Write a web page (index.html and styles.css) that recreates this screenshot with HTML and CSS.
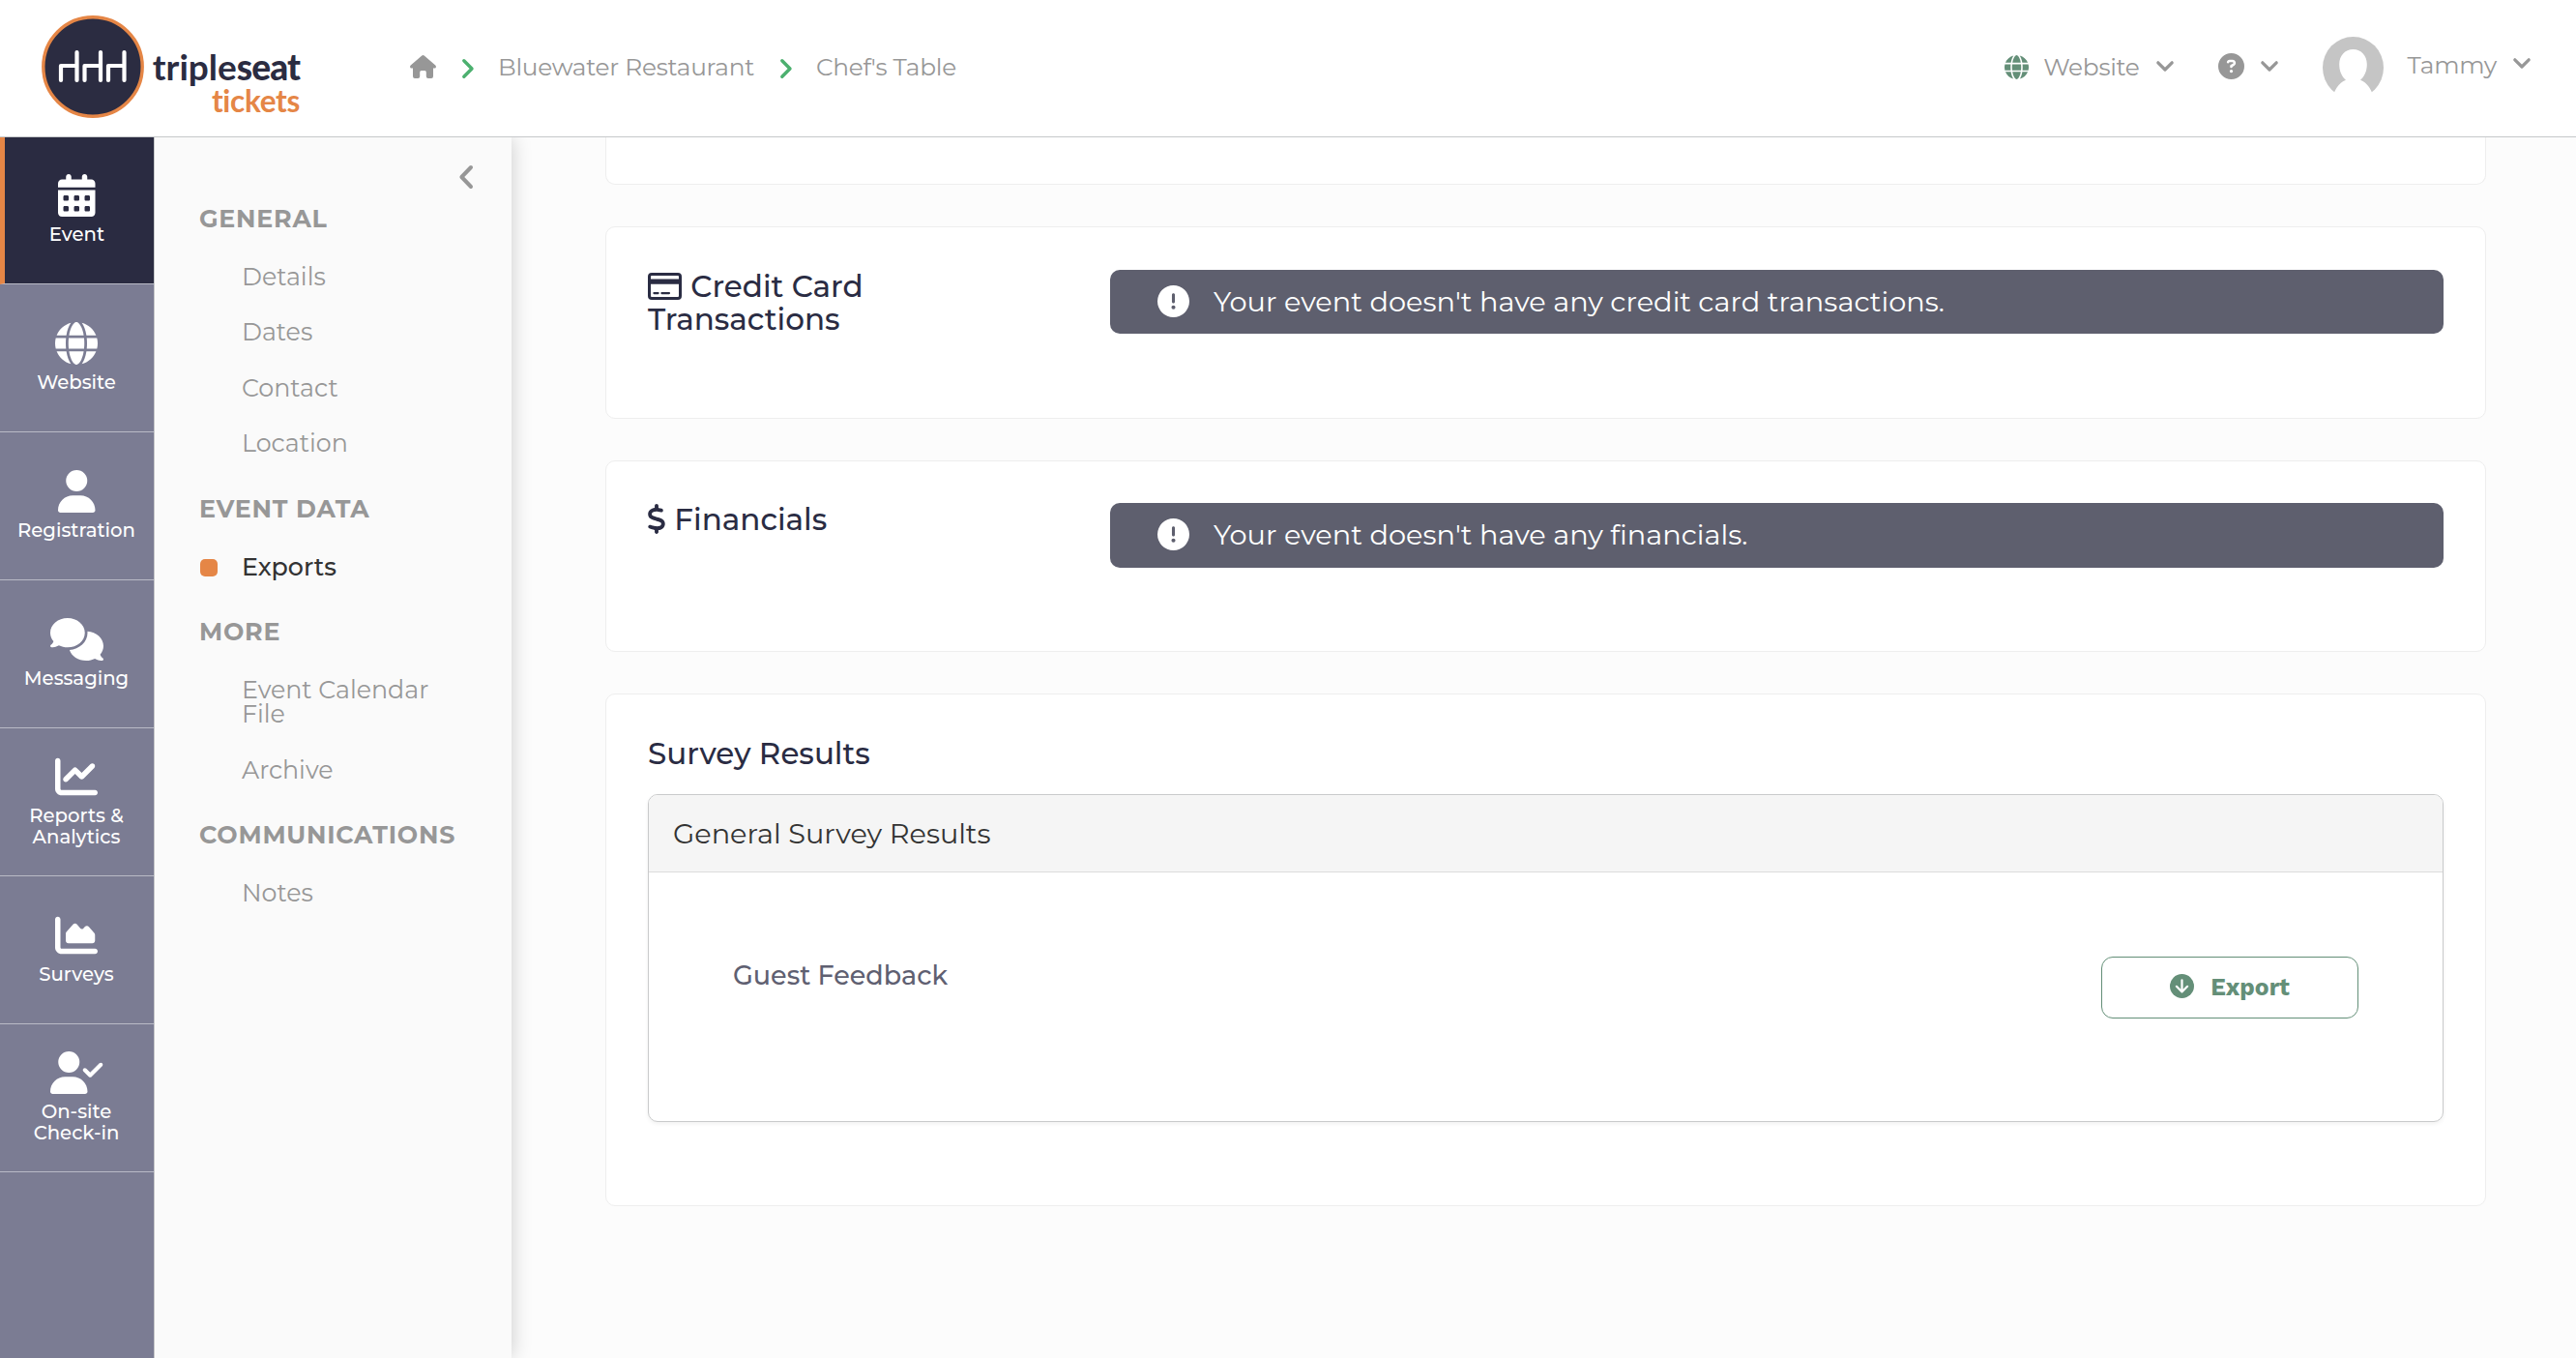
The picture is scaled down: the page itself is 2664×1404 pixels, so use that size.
FILE: index.html
```
<!DOCTYPE html>
<html lang="en">
<head>
    <meta charset="UTF-8">
    <meta name="viewport" content="width=device-width, initial-scale=1.0">
    <title>Chef's Table - Exports - Tripleseat Tickets</title>
    <link rel="stylesheet" href="styles.css">
</head>
<body>
    <header>
        <a class="logo" href="#">
            <svg class="logo-mark" viewBox="0 0 106 106">
                <circle cx="53" cy="53" r="51.2" fill="#2b2c41" stroke="#e58646" stroke-width="3.4"/>
                <g fill="none" stroke="#fff" stroke-width="4.2" stroke-linecap="round" stroke-linejoin="round">
                    <path d="M20 67V52h16.500M36.500 38v29"/>
                    <path d="M44.500 67V52h16.500M61 38v29"/>
                    <path d="M69 67V52h16.500M85.500 38v29"/>
                </g>
            </svg>
            <span class="logo-text">
                <span class="logo-name"><span>triple</span><b>seat</b></span>
                <span class="logo-sub">tickets</span>
            </span>
        </a>

        <nav class="breadcrumb">
            <svg class="home" viewBox="0 0 27 24"><path d="M12.300 .5q1.200-1 2.400 0L26.300 10.600q1.200 1.200.4 2.300-.5.700-1.700.7h-1V22q0 2-2 2h-3.200q-2 0-2-2v-4.300q0-1.600-1.500-1.600h-3.600q-1.500 0-1.500 1.600V22q0 2-2 2H5q-2 0-2-2v-8.400H2q-1.200 0-1.700-.7-.8-1.100.4-2.300z"/></svg>
            <svg class="sep" viewBox="0 0 12 20"><path d="M1.800 1.800L10 10l-8.200 8.200"/></svg>
            <a href="#">Bluewater Restaurant</a>
            <svg class="sep" viewBox="0 0 12 20"><path d="M1.800 1.800L10 10l-8.200 8.200"/></svg>
            <a href="#">Chef's Table</a>
        </nav>

        <div class="tools">
            <a class="tool" href="#">
                <svg class="globe" viewBox="0 0 512 512"><use href="#i-globe"/></svg>
                <span class="tool-website">Website</span>
                <svg class="down" viewBox="0 0 18 11"><path d="M1.800 1.800L9 9l7.200-7.200"/></svg>
            </a>
            <a class="tool" href="#">
                <svg class="help" viewBox="0 0 512 512"><path d="M256 512A256 256 0 1 0 256 0a256 256 0 1 0 0 512zM169.800 165.300c7.900-22.300 29.100-37.300 52.800-37.300h58.300c34.900 0 63.100 28.300 63.100 63.100c0 22.600-12.100 43.500-31.700 54.800L280 264.400c-.2 13-10.900 23.600-24 23.600c-13.300 0-24-10.700-24-24V250.500c0-8.600 4.600-16.500 12.100-20.800l44.300-25.400c4.700-2.700 7.600-7.700 7.600-13.100c0-8.400-6.800-15.100-15.100-15.100H222.600c-3.400 0-6.400 2.100-7.500 5.300l-.4 1.200c-4.400 12.500-18.200 19-30.600 14.600s-19-18.200-14.600-30.600l.4-1.200zM224 352a32 32 0 1 1 64 0 32 32 0 1 1 -64 0z"/></svg>
                <svg class="down" viewBox="0 0 18 11"><path d="M1.800 1.800L9 9l7.200-7.200"/></svg>
            </a>
            <a class="tool user" href="#">
                <svg class="avatar" viewBox="0 0 63 64">
                    <ellipse cx="31.500" cy="32" rx="31.500" ry="32" fill="#c5c5c5"/>
                    <path fill="#fff" d="M31.500 13C23 13 17.200 19.500 17.200 28.500c0 6.800 2.500 12.800 6.800 16.200C16.500 47.500 11.500 56 9.500 65h44C51.500 56 46.500 47.500 39 44.700c4.300-3.400 6.800-9.400 6.800-16.200C45.800 19.500 40 13 31.500 13z"/>
                </svg>
                <span class="tool-name">Tammy</span>
                <svg class="down" viewBox="0 0 18 11"><path d="M1.800 1.800L9 9l7.200-7.200"/></svg>
            </a>
        </div>
    </header>

    <div class="layout">
        <nav class="sidebar">
            <a class="active" href="#">
                <svg viewBox="0 0 448 512"><path d="M128 0c17.700 0 32 14.300 32 32V64H288V32c0-17.700 14.300-32 32-32s32 14.300 32 32V64h48c26.500 0 48 21.500 48 48v48H0V112C0 85.500 21.500 64 48 64H96V32c0-17.700 14.300-32 32-32zM0 192H448V464c0 26.500-21.500 48-48 48H48c-26.500 0-48-21.500-48-48V192zm64 80v32c0 8.800 7.200 16 16 16h32c8.800 0 16-7.200 16-16V272c0-8.800-7.200-16-16-16H80c-8.800 0-16 7.200-16 16zm128 0v32c0 8.800 7.200 16 16 16h32c8.800 0 16-7.200 16-16V272c0-8.800-7.200-16-16-16H208c-8.800 0-16 7.200-16 16zm144-16c-8.800 0-16 7.200-16 16v32c0 8.800 7.200 16 16 16h32c8.800 0 16-7.200 16-16V272c0-8.800-7.200-16-16-16H336zM64 400v32c0 8.800 7.200 16 16 16h32c8.800 0 16-7.200 16-16V400c0-8.800-7.200-16-16-16H80c-8.800 0-16 7.200-16 16zm144-16c-8.800 0-16 7.200-16 16v32c0 8.800 7.200 16 16 16h32c8.800 0 16-7.200 16-16V400c0-8.800-7.200-16-16-16H208zm112 16v32c0 8.800 7.200 16 16 16h32c8.800 0 16-7.200 16-16V400c0-8.800-7.200-16-16-16H336c-8.800 0-16 7.200-16 16z"/></svg>
                <span>Event</span>
            </a>
            <a href="#">
                <svg viewBox="0 0 512 512"><path id="i-globe" d="M352 256c0 22.200-1.200 43.600-3.300 64H163.300c-2.200-20.400-3.300-41.800-3.300-64s1.200-43.600 3.300-64H348.700c2.200 20.400 3.300 41.800 3.300 64zm28.800-64H503.900c5.300 20.500 8.100 41.900 8.100 64s-2.800 43.500-8.100 64H380.800c2.100-20.600 3.200-42 3.200-64s-1.100-43.400-3.200-64zm112.600-32H376.700c-10-63.900-29.800-117.400-55.300-151.600c78.300 20.700 142 77.500 171.900 151.600zm-149.100 0H167.700c6.100-36.400 15.500-68.600 27-94.700c10.500-23.600 22.200-40.700 33.500-51.500C239.400 3.200 248.700 0 256 0s16.600 3.200 27.800 13.800c11.300 10.800 23 27.900 33.500 51.500c11.600 26 20.900 58.200 27 94.700zm-209 0H18.600C48.600 85.900 112.200 29.100 190.600 8.400C165.100 42.600 145.300 96.100 135.300 160zM8.100 192H131.200c-2.100 20.600-3.200 42-3.200 64s1.100 43.400 3.200 64H8.100C2.800 299.500 0 278.100 0 256s2.800-43.500 8.100-64zM194.700 446.600c-11.600-26-20.900-58.200-27-94.600H344.300c-6.100 36.400-15.500 68.600-27 94.600c-10.500 23.600-22.200 40.700-33.500 51.500C272.600 508.800 263.300 512 256 512s-16.600-3.200-27.800-13.800c-11.300-10.800-23-27.900-33.500-51.500zM135.300 352c10 63.900 29.800 117.400 55.300 151.600C112.200 482.900 48.600 426.100 18.600 352H135.300zm358.100 0c-30 74.100-93.600 130.900-171.900 151.600c25.500-34.200 45.200-87.700 55.300-151.600H493.400z"/></svg>
                <span>Website</span>
            </a>
            <a href="#">
                <svg viewBox="0 0 448 512"><path d="M224 256A128 128 0 1 0 224 0a128 128 0 1 0 0 256zm-45.700 48C79.800 304 0 383.800 0 482.300C0 498.700 13.300 512 29.700 512H418.300c16.400 0 29.700-13.300 29.700-29.700C448 383.800 368.200 304 269.700 304H178.300z"/></svg>
                <span>Registration</span>
            </a>
            <a href="#">
                <svg viewBox="0 0 640 512"><path d="M208 352c114.900 0 208-78.800 208-176S322.900 0 208 0S0 78.800 0 176c0 38.600 14.700 74.300 39.600 103.400c-3.500 9.400-8.700 17.700-14.200 24.700c-4.800 6.200-9.700 11-13.300 14.300c-1.800 1.600-3.300 2.900-4.300 3.700c-.5 .4-.9 .7-1.100 .8l-.2 .2C1 327.200-1.400 334.400 .8 340.900S9.100 352 16 352c21.800 0 43.800-5.600 62.100-12.500c9.200-3.500 17.800-7.400 25.200-11.400C134.100 343.300 169.800 352 208 352zM448 176c0 112.300-99.100 196.900-216.500 207C255.800 457.400 336.400 512 432 512c38.200 0 73.900-8.700 104.700-23.900c7.500 4 16 7.900 25.200 11.400c18.300 6.900 40.300 12.500 62.100 12.500c6.900 0 13.100-4.500 15.200-11.100c2.100-6.600-.2-13.800-5.800-17.900l-.2-.2c-.2-.2-.6-.4-1.100-.8c-1-.8-2.500-2-4.300-3.700c-3.600-3.300-8.500-8.100-13.300-14.300c-5.500-7-10.700-15.400-14.200-24.700c24.900-29 39.600-64.700 39.600-103.400c0-92.800-84.900-168.900-192.600-175.500c.4 5.100 .6 10.300 .6 15.500z"/></svg>
                <span>Messaging</span>
            </a>
            <a href="#">
                <svg viewBox="0 0 512 512"><path d="M64 64c0-17.700-14.300-32-32-32S0 46.300 0 64V400c0 44.200 35.800 80 80 80H480c17.700 0 32-14.300 32-32s-14.300-32-32-32H80c-8.800 0-16-7.200-16-16V64zm406.600 86.600c12.500-12.500 12.500-32.800 0-45.300s-32.800-12.500-45.300 0L320 210.700l-57.400-57.400c-12.500-12.500-32.800-12.500-45.300 0l-112 112c-12.500 12.500-12.500 32.800 0 45.300s32.800 12.500 45.300 0L240 221.300l57.400 57.400c12.500 12.500 32.800 12.500 45.300 0l128-128z"/></svg>
                <span>Reports &amp;<br>Analytics</span>
            </a>
            <a href="#">
                <svg viewBox="0 0 512 512"><path d="M64 64c0-17.700-14.300-32-32-32S0 46.300 0 64V400c0 44.200 35.800 80 80 80H480c17.700 0 32-14.300 32-32s-14.300-32-32-32H80c-8.800 0-16-7.200-16-16V64zm96 288H448c17.700 0 32-14.300 32-32V251.800c0-7.600-2.700-15-7.700-20.800l-65.800-76.800c-12.100-14.200-33.700-15-46.900-1.800l-21 21c-10 10-26.400 9.200-35.400-1.600l-39.200-47c-12.600-15.100-35.700-15.400-48.700-.6L135.900 215c-5.100 5.800-7.900 13.300-7.900 21.100v84c0 17.700 14.300 32 32 32z"/></svg>
                <span>Surveys</span>
            </a>
            <a href="#">
                <svg viewBox="0 0 640 512"><path d="M96 128a128 128 0 1 1 256 0A128 128 0 1 1 96 128zM0 482.300C0 383.800 79.800 304 178.300 304h91.400C368.200 304 448 383.800 448 482.300c0 16.400-13.300 29.700-29.700 29.700H29.700C13.300 512 0 498.700 0 482.300zM625 177L497 305c-9.400 9.400-24.600 9.400-33.900 0l-64-64c-9.400-9.400-9.400-24.600 0-33.900s24.600-9.400 33.900 0l47 47L591 143c9.400-9.400 24.600-9.400 33.900 0s9.400 24.600 0 33.900z"/></svg>
                <span>On-site<br>Check-in</span>
            </a>
        </nav>

        <aside class="menu">
            <svg class="collapse" viewBox="0 0 14 24"><path d="M12 2L2.400 12l9.600 10"/></svg>
            <h4>General</h4>
            <ul>
                <li><a href="#">Details</a></li>
                <li><a href="#">Dates</a></li>
                <li><a href="#">Contact</a></li>
                <li><a href="#">Location</a></li>
            </ul>
            <h4>Event Data</h4>
            <ul>
                <li class="active"><a href="#">Exports</a></li>
            </ul>
            <h4>More</h4>
            <ul>
                <li><a href="#">Event Calendar File</a></li>
                <li><a href="#">Archive</a></li>
            </ul>
            <h4>Communications</h4>
            <ul>
                <li><a href="#">Notes</a></li>
            </ul>
        </aside>

        <main>
            <section class="card card-cut"></section>

            <section class="card card-row">
                <h3>
                    <svg class="credit-card" viewBox="0 0 35 28">
                        <rect x="1.500" y="1.500" width="32" height="25" rx="2.500" fill="none" stroke="#2a2c43" stroke-width="3"/>
                        <path d="M2 6.500h31v5.200H2zM6.400 20h4.200a1 1 0 0 1 0 2.200H6.400a1 1 0 0 1 0-2.200zM14.400 20h7.600a1 1 0 0 1 0 2.200h-7.600a1 1 0 0 1 0-2.200z"/>
                    </svg>
                    Credit Card Transactions
                </h3>
                <div class="alert">
                    <svg viewBox="0 0 512 512"><path id="i-alert" d="M256 512A256 256 0 1 0 256 0a256 256 0 1 0 0 512zm0-384c13.300 0 24 10.700 24 24V264c0 13.300-10.700 24-24 24s-24-10.700-24-24V152c0-13.300 10.700-24 24-24zM224 352a32 32 0 1 1 64 0 32 32 0 1 1 -64 0z"/></svg>
                    <span>Your event doesn't have any credit card transactions.</span>
                </div>
            </section>

            <section class="card card-row financials">
                <h3>
                    <svg class="dollar" viewBox="12 0 296 512"><path d="M160 0c17.700 0 32 14.300 32 32V67.700c1.600 .2 3.100 .4 4.700 .7c.4 .1 .7 .1 1.100 .2l48 8.800c17.400 3.200 28.900 19.900 25.700 37.200s-19.900 28.900-37.200 25.700l-47.500-8.700c-31.300-4.600-58.900-1.500-78.300 6.200s-27.200 18.300-29 28.100c-2 10.700-.5 16.700 1.200 20.400c1.800 3.900 5.500 8.300 12.800 13.200c16.300 10.700 41.300 17.700 73.700 26.300l2.900 .8c28.600 7.600 63.600 16.800 89.600 33.800c14.200 9.300 27.600 21.900 35.900 39.500c8.500 17.900 10.300 37.900 6.400 59.200c-6.900 38-33.100 63.400-65.600 76.700c-13.700 5.600-28.600 9.200-44.400 11V480c0 17.700-14.300 32-32 32s-32-14.300-32-32V445.100c-.4-.1-.9-.1-1.300-.2l-.2 0 0 0c-24.400-3.800-64.500-14.300-91.500-26.300c-16.100-7.200-23.400-26.100-16.200-42.200s26.100-23.400 42.200-16.200c20.900 9.300 55.300 18.500 75.200 21.600c31.900 4.700 58.200 2 76-5.300c16.900-6.900 24.600-16.900 26.800-28.900c1.900-10.600 .4-16.700-1.300-20.400c-1.900-4-5.600-8.400-13-13.300c-16.400-10.700-41.500-17.700-74-26.300l-2.800-.7 0 0C119.400 279.300 84.400 270 58.400 253c-14.200-9.300-27.500-22-35.800-39.600c-8.400-17.900-10.100-37.900-6.100-59.200C23.700 116 52.300 91.200 84.800 78.300c13.300-5.300 27.900-8.900 43.200-11V32c0-17.700 14.300-32 32-32z"/></svg>
                    Financials
                </h3>
                <div class="alert">
                    <svg viewBox="0 0 512 512"><use href="#i-alert"/></svg>
                    <span>Your event doesn't have any financials.</span>
                </div>
            </section>

            <section class="card surveys">
                <h3>Survey Results</h3>
                <div class="panel">
                    <div class="panel-heading">General Survey Results</div>
                    <div class="panel-body">
                        <span class="survey-name">Guest Feedback</span>
                        <button type="button" class="btn-export">
                            <svg viewBox="0 0 25 25">
                                <circle cx="12.500" cy="12.500" r="12.500" fill="#648f78"/>
                                <path d="M12.500 6.400v12M6.900 12.800l5.600 5.700 5.600-5.700" fill="none" stroke="#fff" stroke-width="2.200" stroke-linecap="round" stroke-linejoin="round"/>
                            </svg>
                            Export
                        </button>
                    </div>
                </div>
            </section>
        </main>
    </div>
</body>
</html>
```
FILE: styles.css
```
* {
    box-sizing: border-box;
}

body {
    margin: 0;
    height: 1404px;
    overflow: hidden;
    display: flex;
    flex-direction: column;
    font-family: Montserrat, Inter, sans-serif;
    font-size: 25.3px;
    color: #333;
    background: #fcfcfc;
}

a {
    color: inherit;
    text-decoration: none;
}

svg {
    display: block;
    flex: none;
    fill: currentColor;
    overflow: visible;
}

/* Header */
header {
    position: relative;
    z-index: 3;
    height: 142px;
    flex: none;
    display: flex;
    align-items: center;
    padding: 0 47px 3px 43px;
    background: #fff;
    border-bottom: 1px solid #c6c8ca;
    color: #979797;
    font-size: 24.8px;
    letter-spacing: -0.25px;
}

.logo {
    display: flex;
    align-items: flex-start;
    width: 381px;
}

.logo-mark {
    width: 106px;
    height: 106px;
}

.logo-text {
    display: flex;
    flex-direction: column;
    align-items: flex-end;
    width: 153px;
    margin-left: 8px;
    padding-top: 34px;
    font-family: Lato, sans-serif;
    font-weight: 700;
}

.logo-name {
    display: flex;
    font-size: 37px;
    line-height: 38px;
    letter-spacing: 0;
    color: #2b2c41;
}

.logo-name b {
    font-weight: 900;
    letter-spacing: -0.9px;
}

.logo-sub {
    font-size: 31.5px;
    line-height: 33px;
    letter-spacing: -0.3px;
    color: #e58646;
}

.breadcrumb {
    display: flex;
    align-items: center;
}

.home {
    width: 27px;
    height: 24px;
}

.sep {
    width: 12px;
    height: 20px;
    margin: 4px 25px 0 27px;
}

.sep path,
.down path,
.collapse path {
    fill: none;
    stroke: #4cb06f;
    stroke-width: 3.4;
    stroke-linecap: round;
    stroke-linejoin: round;
}

.tools {
    margin-left: auto;
    display: flex;
    align-items: center;
}

.tool {
    display: flex;
    align-items: center;
}

.tool + .tool {
    margin-left: 46px;
}

.globe {
    width: 25px;
    height: 25px;
    color: #648f78;
}

.tool-website {
    margin-left: 15px;
}

.tool-name {
    margin: -4px 0 0 25px;
}

.down {
    width: 18px;
    height: 11px;
    margin: -2px 0 0 17px;
}

.down path {
    stroke: #979797;
    stroke-width: 3.2;
}

.user .down {
    margin-top: -8px;
}

.help {
    width: 27px;
    height: 27px;
    margin-top: -2px;
}

.avatar {
    width: 63px;
    height: 64px;
    margin-top: 1px;
}

/* Layout */
.layout {
    flex: 1;
    display: flex;
    min-height: 0;
}

.sidebar {
    position: relative;
    z-index: 2;
    width: 160px;
    flex: none;
    background: #7b7c93;
    border-right: 1px solid #c6c8ca;
    color: #fff;
}

.sidebar a {
    height: 153px;
    padding: 0 1px 1px 0;
    display: flex;
    flex-direction: column;
    align-items: center;
    justify-content: center;
    border-bottom: 1px solid #b9bac6;
    font-size: 19.7px;
    font-weight: 500;
    line-height: 21.3px;
    text-align: center;
}

.sidebar a.active {
    height: 152px;
    padding-right: 5px;
    background: #2a2b41;
    border-left: 5px solid #e58646;
}

.sidebar svg {
    height: 44px;
    margin-bottom: 8px;
}

/* Event menu */
.menu {
    position: relative;
    z-index: 1;
    width: 369px;
    flex: none;
    padding: 29px 40px 0 46px;
    background: #fafafa;
    box-shadow: 0 0 20px rgba(0, 0, 0, 0.2);
    color: #979797;
    line-height: 25.3px;
}

.collapse {
    width: 14px;
    height: 24px;
    margin: 0 0 18.6px auto;
}

.collapse path {
    stroke: #979797;
    stroke-width: 4;
}

.menu h4 {
    margin: 25.9px 0 18.6px;
    font-size: 25.3px;
    letter-spacing: 0.78px;
    text-transform: uppercase;
    white-space: nowrap;
}

.menu .collapse + h4 {
    margin-top: 0;
}

.menu ul {
    list-style: none;
    margin: 0;
    padding: 0;
}

.menu li {
    position: relative;
    padding: 16.15px 0 16.15px 44px;
}

.menu li.active {
    color: #333;
    font-weight: 500;
}

.menu li.active::before {
    content: "";
    position: absolute;
    left: 1px;
    top: 20px;
    width: 18px;
    height: 18px;
    border-radius: 5px;
    background: #e58646;
}

/* Content */
main {
    flex: 1;
    padding: 0 93px 0 97px;
}

.card {
    background: #fff;
    border: 1px solid #eee;
    border-radius: 10px;
    padding: 44px 43px;
    margin-bottom: 43px;
}

.card-cut {
    height: 49px;
    padding: 0;
    border-top: none;
    border-radius: 0 0 10px 10px;
}

.card h3 {
    margin: 0;
    font-size: 31px;
    font-weight: 500;
    line-height: 34px;
    color: #2a2c43;
}

.card h3 svg {
    display: inline-block;
}

.card-row {
    height: 199px;
    display: flex;
    align-items: flex-start;
}

.card-row h3 {
    width: 478px;
    padding-right: 200px;
}

.card-row.financials {
    height: 198px;
    padding-top: 43px;
}

.financials .alert {
    height: 67px;
}

.credit-card {
    width: 35px;
    height: 28px;
    vertical-align: -3px;
    margin-right: 1px;
}

.dollar {
    width: 18px;
    height: 31px;
    vertical-align: -4px;
    margin-right: 1px;
}

.alert {
    flex: 1;
    height: 66px;
    padding: 0 49px 2px;
    display: flex;
    align-items: center;
    gap: 25px;
    border-radius: 10px;
    background: #5e5f6e;
    color: #fff;
    font-size: 28.8px;
}

.alert svg {
    width: 33px;
    height: 33px;
}

.surveys {
    height: 530px;
}

.panel {
    height: 339px;
    margin-top: 25px;
    border: 1px solid #c9cacb;
    border-radius: 10px;
    box-shadow: 0 2px 4px rgba(0, 0, 0, 0.06);
    overflow: hidden;
}

.panel-heading {
    height: 80px;
    padding-left: 25px;
    line-height: 80px;
    font-size: 28.8px;
    background: #f5f5f5;
    border-bottom: 1px solid #dcdcdc;
}

.panel-body {
    padding: 87px;
    display: flex;
    justify-content: space-between;
    align-items: flex-start;
}

.survey-name {
    font-size: 27px;
    font-weight: 500;
    line-height: 39px;
    color: #5f6071;
}

.btn-export {
    width: 266px;
    height: 64px;
    padding: 0 0 1px;
    display: flex;
    align-items: center;
    justify-content: center;
    gap: 17px;
    font-family: "Work Sans", Inter, sans-serif;
    font-size: 24.7px;
    font-weight: 700;
    color: #648f78;
    background: #fff;
    border: 1px solid #648f78;
    border-radius: 12px;
}

.btn-export svg {
    width: 25px;
    height: 25px;
    margin-top: -2px;
}
```
